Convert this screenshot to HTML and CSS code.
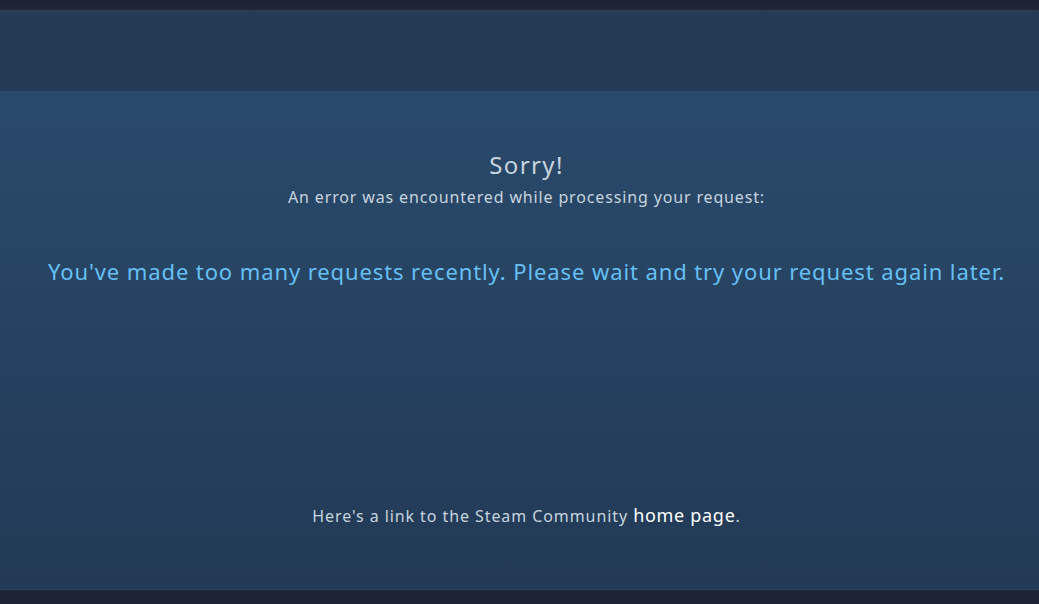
FILE: index.html
```html
<!DOCTYPE html>
<html lang="en">
<head>
    <meta charset="UTF-8">
    <title>Steam Community :: Error</title>
    <link rel="stylesheet" href="styles.css">
</head>
<body>

    <div class="global-header"></div>

    <div class="page-header"></div>

    <div class="page-content">
        <div class="error-box">
            <h2 class="error-title">Sorry!</h2>
            <div class="error-subtitle">An error was encountered while processing your request:</div>
            <h3 class="error-message">You've made too many requests recently. Please wait and try your request again later.</h3>
        </div>

        <div class="error-footer">
            Here's a link to the Steam Community <a href="#">home page</a>.
        </div>
    </div>

    <div class="page-footer"></div>

</body>
</html>
```

FILE: styles.css
```css
body {
    margin: 0;
    height: 604px;
    overflow: hidden;
    font-family: "Noto Sans", Arial, sans-serif;
    color: #c6d4df;
    background-color: #1b2535;
    display: flex;
    flex-direction: column;
}

.global-header {
    height: 10px;
    background: linear-gradient(to bottom, #1a2230, #1e2839);
}

.page-header {
    height: 78px;
    border-top: 2px solid #2b3d52;
    border-bottom: 1px solid #243c57;
    background-color: #233b55;
}

.page-content {
    height: 498px;
    padding-left: 14px;
    display: flex;
    flex-direction: column;
    align-items: center;
    background: linear-gradient(to bottom, #2a4a6b, #223a56);
    border-bottom: 1px solid #2a4060;
}

.error-box {
    text-align: center;
    padding-top: 57px;
}

.error-title {
    margin: 0;
    font-size: 24px;
    font-weight: normal;
    line-height: 34px;
    letter-spacing: 1.4px;
    color: #c6d4df;
}

.error-subtitle {
    margin-top: 5px;
    font-size: 16px;
    line-height: 20px;
    letter-spacing: 0.85px;
}

.error-message {
    margin: 50px 0 0 0;
    font-size: 22px;
    font-weight: normal;
    line-height: 28px;
    letter-spacing: 0.9px;
    color: #66c0f4;
}

.error-footer {
    margin-top: 219px;
    font-size: 16px;
    line-height: 22px;
    letter-spacing: 0.92px;
}

.error-footer a {
    color: #ffffff;
    font-size: 18px;
    letter-spacing: 0.7px;
    text-decoration: none;
}

.page-footer {
    flex: 1;
    background-color: #1b2535;
}
```
